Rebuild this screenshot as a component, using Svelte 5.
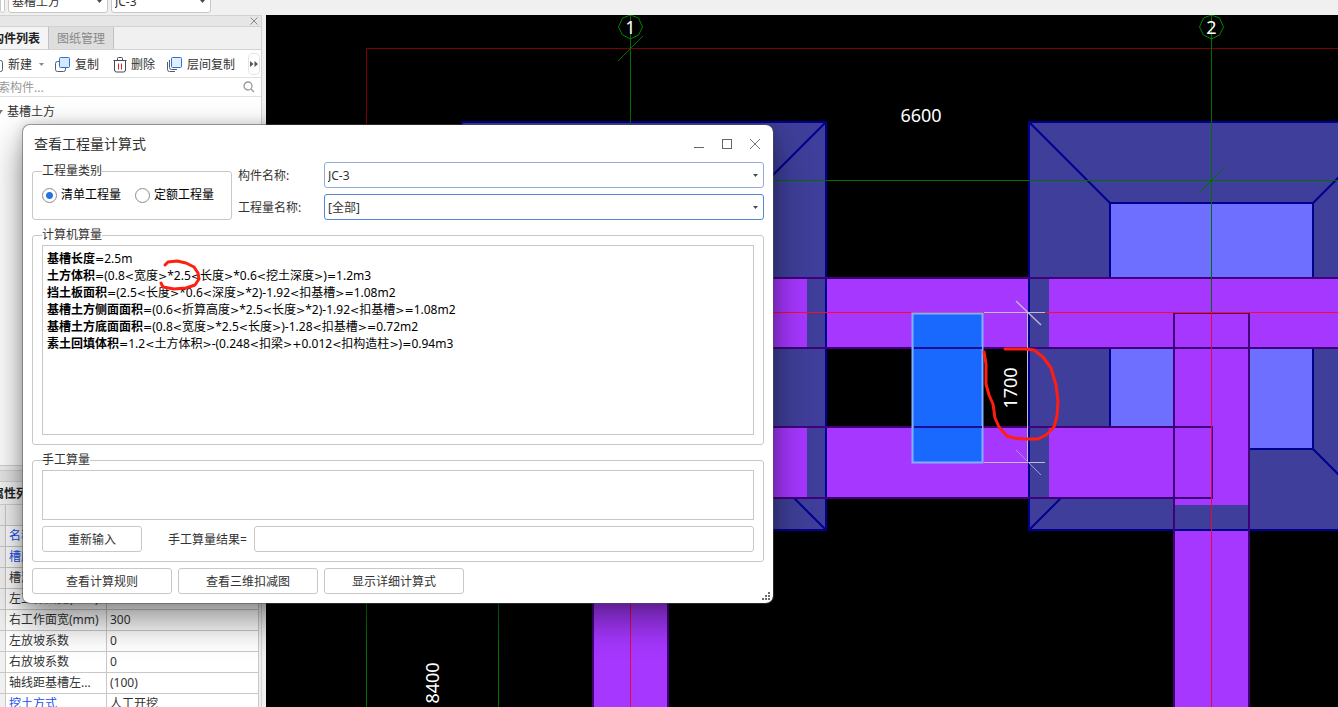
<script lang="ts">
  interface Formula {
    name: string;
    expr: string;
  }

  interface Property {
    name: string;
    value: string;
    link?: boolean;
  }

  const formulas: Formula[] = [
    { name: "基槽长度", expr: "=2.5m" },
    { name: "土方体积", expr: "=(0.8<宽度>*2.5<长度>*0.6<挖土深度>)=1.2m3" },
    { name: "挡土板面积", expr: "=(2.5<长度>*0.6<深度>*2)-1.92<扣基槽>=1.08m2" },
    { name: "基槽土方侧面面积", expr: "=(0.6<折算高度>*2.5<长度>*2)-1.92<扣基槽>=1.08m2" },
    { name: "基槽土方底面面积", expr: "=(0.8<宽度>*2.5<长度>)-1.28<扣基槽>=0.72m2" },
    { name: "素土回填体积", expr: "=1.2<土方体积>-(0.248<扣梁>+0.012<扣构造柱>)=0.94m3" },
  ];

  const properties: Property[] = [
    { name: "名称", value: "", link: true },
    { name: "槽底宽", value: "", link: true },
    { name: "槽深", value: "" },
    { name: "左工作面宽(mm)", value: "300" },
    { name: "右工作面宽(mm)", value: "300" },
    { name: "左放坡系数", value: "0" },
    { name: "右放坡系数", value: "0" },
    { name: "轴线距基槽左...", value: "(100)" },
    { name: "挖土方式", value: "人工开挖", link: true },
  ];

  let mode = $state("list");
  let manual = $state("");
  let result = $state("");

  // operators get their own, wider face
  function tokens(expr: string) {
    return expr.split(/([<>=+])/).filter(Boolean);
  }
</script>

<div class="app">
  <header class="topbar">
    <select class="top-select first" aria-label="楼层"><option></option></select>
    <select class="top-select" aria-label="构件类型"><option>基槽土方</option></select>
    <select class="top-select" aria-label="构件"><option>JC-3</option></select>
  </header>

  <div class="workspace">
    <aside class="sidebar">
      <section class="components">
        <div class="strip">
          <button class="strip-close" aria-label="关闭">
            <svg width="8" height="8" viewBox="0 0 8 8"><path d="M.5.5l7 7M7.5.5l-7 7" stroke="#8a8a8a" /></svg>
          </button>
        </div>
        <div class="tabs">
          <button class="tab active">构件列表</button>
          <button class="tab">图纸管理</button>
        </div>
        <div class="toolbar">
          <button class="tool">
            <svg width="16" height="16" viewBox="0 0 16 16" fill="none" stroke="#555a6e"><path d="M3.500 3.500h9a2 2 0 0 1 2 2v7a2 2 0 0 1-2 2h-9z" /></svg>
            新建
            <svg class="more" width="5" height="3" viewBox="0 0 5 3"><path d="M0 0h5L2.500 3z" fill="#888" /></svg>
          </button>
          <button class="tool copy">
            <svg width="16" height="16" viewBox="0 0 16 16" fill="none">
              <path d="M4 4.500H2.500a2 2 0 0 0-2 2v6a2 2 0 0 0 2 2h6a2 2 0 0 0 2-2V11" stroke="#555a6e" />
              <rect x="4.500" y=".5" width="10" height="10" rx="1" fill="#d8e8fb" stroke="#2374e1" />
            </svg>
            复制
          </button>
          <button class="tool del">
            <svg width="14" height="16" viewBox="0 0 14 16" fill="none">
              <path d="M.5 3.500h13M4.500 3V1.500a1 1 0 0 1 1-1h3a1 1 0 0 1 1 1V3M1.500 4v9a2 2 0 0 0 2 2h7a2 2 0 0 0 2-2V4" stroke="#444959" />
              <path d="M5.500 6.500v6M8.500 6.500v6" stroke="#e02020" />
            </svg>
            删除
          </button>
          <button class="tool floors">
            <svg width="16" height="16" viewBox="0 0 16 16" fill="none">
              <path d="M.5 5v7.500a2 2 0 0 0 2 2H8M2.500 3v7.500a2 2 0 0 0 2 2H10" stroke="#555a6e" />
              <rect x="4.500" y=".5" width="10" height="10" rx="1" fill="#e2eefc" stroke="#2374e1" />
            </svg>
            层间复制
          </button>
          <button class="overflow" aria-label="更多">
            <svg width="8" height="6" viewBox="0 0 8 6"><path d="M0 0l3.500 3L0 6zM4.500 0L8 3 4.500 6z" fill="#555" /></svg>
          </button>
        </div>
        <label class="search">
          <input type="text" placeholder="搜索构件..." aria-label="搜索构件" />
          <svg width="12" height="12" viewBox="0 0 12 12" fill="none" stroke="#999" stroke-width="1.300"><circle cx="5" cy="5" r="4" /><path d="M8 8l3 3" /></svg>
        </label>
        <div class="tree">
          <div class="tree-node">
            <svg width="7" height="5" viewBox="0 0 7 5"><path d="M0 0h7L3.500 5z" fill="#777" /></svg>
            基槽土方
          </div>
        </div>
      </section>

      <section class="properties">
        <div class="strip"></div>
        <div class="tabs"><button class="tab active">属性列表</button></div>
        <table>
          <thead>
            <tr><th class="index"></th><th class="name"></th><th></th></tr>
          </thead>
          <tbody>
            {#each properties as property (property.name)}
              <tr>
                <td class="index"></td>
                <td class="name" class:link={property.link}>{property.name}</td>
                <td>{property.value}</td>
              </tr>
            {/each}
          </tbody>
        </table>
      </section>
    </aside>

    <main class="canvas">
      <svg width="100%" height="100%" aria-label="基槽平面图">
        <g transform="translate(-266 -15)">
          <!-- excavation slopes -->
          <g fill="#3f3f9b" stroke="#00008f" stroke-width="2">
            <rect x="462" y="122" width="364" height="408" />
            <rect x="1029" y="122" width="365" height="408" />
            <path fill="none" d="M826 122l-81 81M826 530l-81-81M1029 122l81 81M1029 530l81-81M1313 203l81-81M1313 449l81 81" />
            <rect x="1110" y="203" width="203" height="246" fill="#6f6fff" />
          </g>

          <!-- trenches -->
          <g fill="#a637ff">
            <rect x="593" y="560" width="75" height="180" />
            <rect x="560" y="278" width="900" height="70" />
            <rect x="560" y="427" width="652" height="71" />
            <rect x="1174" y="313" width="75" height="420" />
          </g>
          <g fill="#3f3f9b">
            <rect x="807" y="278" width="19" height="70" />
            <rect x="1029" y="278" width="20" height="70" />
            <rect x="807" y="427" width="19" height="71" />
            <rect x="1029" y="427" width="20" height="71" />
            <rect x="1174" y="505" width="75" height="25" />
          </g>
          <path d="M826 278v70M826 427v71M1029 278v70M1029 427v71M1174 530h75" stroke="#00008f" stroke-width="2" />
          <g fill="none" stroke="#40007c" stroke-width="2">
            <path d="M560 278h900M560 348h900M560 427h652v71H560" />
            <path d="M1174 740V313h75v427M593 740V560M668 740V560" />
          </g>

          <!-- axis grid -->
          <g fill="none" shape-rendering="crispEdges">
            <path d="M366.500 240V48.500H1400" stroke="#7b0000" />
            <path d="M630.500 15v200M1211.500 15v297M366.500 560v160M498.500 560v160M560 180.500h840" stroke="#006f00" />
            <path d="M560 312.500h840" stroke="#ff0a28" />
            <path d="M630.500 560v160M1211.500 313v407" stroke="#e60a3c" />
          </g>
          <g fill="none" stroke="#006f00">
            <path d="M618 61l25-25M1199 193l25-25" />
            <path d="M630.500 15l8 3 4 9-4 8-8 4-8-4-4-8 4-9zM1211.500 15l8 3 4 9-4 8-8 4-8-4-4-8 4-9z" stroke="#008500" />
          </g>

          <!-- selected trench -->
          <rect x="912.500" y="313.500" width="70" height="149" fill="#1a69ff" stroke="#83aeff" stroke-width="2" />
          <path d="M914 348h68M914 427h68" stroke="#220c93" stroke-width="2" />

          <g fill="none" stroke="#c4b9cf">
            <path d="M984 312.500h61M984 462.500h61M1027.500 312v150" shape-rendering="crispEdges" />
            <path d="M1016 301l25 24" stroke-width="1.300" />
            <path d="M1016 450l25 25" stroke="#aa93cf" />
          </g>

          <g class="dims">
            <text x="630.500" y="34">1</text>
            <text x="1211.500" y="34">2</text>
            <text x="921" y="122">6600</text>
            <text transform="translate(1017 388) rotate(-90)">1700</text>
            <text transform="translate(439 683) rotate(-90)">8400</text>
          </g>
        </g>
      </svg>
    </main>
  </div>

  <div class="dialog" role="dialog" aria-labelledby="dialog-title">
    <div class="titlebar">
      <h1 id="dialog-title">查看工程量计算式</h1>
      <div class="window-buttons">
        <button aria-label="最小化"><svg width="12" height="12" viewBox="0 0 12 12"><path d="M1 9.500h10" stroke="#666" /></svg></button>
        <button aria-label="最大化"><svg width="12" height="12" viewBox="0 0 12 12"><rect x="1.500" y="1.500" width="9" height="9" fill="none" stroke="#666" /></svg></button>
        <button aria-label="关闭"><svg width="12" height="12" viewBox="0 0 12 12"><path d="M1 1l10 10M11 1L1 11" stroke="#777" /></svg></button>
      </div>
    </div>

    <div class="filters">
      <fieldset class="kind">
        <legend>工程量类别</legend>
        <div class="radios">
          <label><input type="radio" name="mode" value="list" bind:group={mode} />清单工程量</label>
          <label><input type="radio" name="mode" value="quota" bind:group={mode} />定额工程量</label>
        </div>
      </fieldset>
      <div class="combos">
        <label for="component">构件名称:</label>
        <select id="component"><option>JC-3</option></select>
        <label for="quantity">工程量名称:</label>
        <select id="quantity" class="focused"><option>[全部]</option></select>
      </div>
    </div>

    <fieldset>
      <legend>计算机算量</legend>
      <div class="formulas">
        {#each formulas as formula (formula.name)}
          <p>
            <b>{formula.name}</b>{#each tokens(formula.expr) as token}<span class:op={"<>=+".includes(token)}>{token}</span>{/each}
          </p>
        {/each}
      </div>
    </fieldset>

    <fieldset>
      <legend>手工算量</legend>
      <textarea bind:value={manual} aria-label="手工算量"></textarea>
      <div class="manual-row">
        <button class="btn small" onclick={() => (manual = "")}>重新输入</button>
        <label for="result">手工算量结果=</label>
        <input id="result" type="text" bind:value={result} />
      </div>
    </fieldset>

    <div class="actions">
      <button class="btn">查看计算规则</button>
      <button class="btn">查看三维扣减图</button>
      <button class="btn">显示详细计算式</button>
    </div>

    <svg class="grip" width="8" height="8" viewBox="0 0 8 8" fill="#666b75">
      <path d="M6 0h2v2H6zM3 3h2v2H3zM6 3h2v2H6zM0 6h2v2H0zM3 6h2v2H3zM6 6h2v2H6z" />
    </svg>
  </div>

  <!-- pen marks -->
  <svg class="marks" width="100%" height="100%" fill="none" stroke="#ff1e10" stroke-width="3" stroke-linecap="round" stroke-linejoin="round">
    <path d="M165 265l3-3 9-1 9 2 8 4 4 6 1 6-4 6-9 3-12 1-11-2-2-4" />
    <path d="M984 352l2 12v20l3 11 4 9 2 14 4 9 8 9 7 2 10 1h14l8-4 8-8 3-11 1-15-2-16-5-17-8-11-9-7-9-1h-20" />
  </svg>
</div>

<style>
  :global(body) {
    margin: 0;
  }

  .app {
    position: relative;
    display: flex;
    flex-direction: column;
    height: 100vh;
    overflow: hidden;
    background: #f0f0f0;
    color: #333;
    font: 12px/16px "Noto Sans", "Noto Sans CJK SC", sans-serif;
  }

  button,
  input,
  select,
  textarea {
    box-sizing: border-box;
    margin: 0;
    font: inherit;
    color: inherit;
  }

  button {
    padding: 0;
    border: 0;
    background: none;
  }

  .topbar {
    display: flex;
    align-items: flex-end;
    gap: 3px;
    height: 13px;
    padding-bottom: 2px;
    flex: none;
  }

  select {
    appearance: none;
    border: 1px solid #c8c8c8;
    border-radius: 3px;
    background: #fff url("data:image/svg+xml,%3Csvg xmlns='http://www.w3.org/2000/svg' width='5' height='3'%3E%3Cpath d='M0 0h5L2.500 3z' fill='%23444a5c'/%3E%3C/svg%3E") no-repeat right 5px center;
  }

  .top-select {
    width: 100px;
    height: 24px;
    padding: 2px 3px 0;
    flex: none;
  }

  .top-select.first {
    width: 5px;
    background-image: none;
    padding: 0;
  }

  .workspace {
    flex: 1;
    display: flex;
    min-height: 0;
  }

  .sidebar {
    flex: none;
    display: flex;
    flex-direction: column;
    gap: 4px;
    width: 261px;
    margin-right: 4px;
    overflow: hidden;
    border-right: 1px solid #d2d2d2;
  }

  .components {
    height: 451px;
    display: flex;
    flex-direction: column;
    border-bottom: 1px solid #d2d2d2;
    box-sizing: border-box;
    background: #fff;
    flex: none;
  }

  .strip {
    display: flex;
    justify-content: flex-end;
    align-items: center;
    height: 12px;
    box-sizing: border-box;
    border: solid #d2d2d2;
    border-width: 1px 0;
    background: #e6e6e6;
  }

  .strip-close {
    display: flex;
    margin-right: 3px;
  }

  .tabs {
    display: flex;
    height: 23px;
    box-sizing: border-box;
    border-bottom: 1px solid #d2d2d2;
    background: #f0f0f0;
  }

  .tab {
    height: 22px;
    width: 65px;
    padding-top: 2px;
    border-right: 1px solid #bfc2c6;
    background: #dedede;
    color: #888;
  }

  .tab.active {
    margin-left: -16px;
    background: #f4f4f4;
    color: #222;
    font-weight: bold;
  }

  .toolbar {
    display: flex;
    align-items: center;
    height: 28px;
    box-sizing: border-box;
    border-bottom: 1px solid #e0e0e0;
    margin-left: -12px;
    white-space: nowrap;
  }

  .tool {
    display: flex;
    align-items: center;
    gap: 4px;
    padding-top: 2px;
    flex: none;
  }

  .tool .more {
    margin-left: 3px;
  }

  .tool.copy {
    margin-left: 11px;
  }

  .tool.del {
    margin-left: 14px;
  }

  .tool.floors {
    margin-left: 12px;
  }

  .overflow {
    display: flex;
    align-items: center;
    justify-content: center;
    width: 10px;
    height: 20px;
    margin-left: auto;
    margin-right: 2px;
    border-radius: 4px;
    box-shadow: 0 0 0 1px #e4e4e4;
  }

  .search {
    display: flex;
    align-items: center;
    height: 19px;
    box-sizing: border-box;
    border-bottom: 1px solid #e0e0e0;
    padding-right: 6px;
    margin-left: -14px;
  }

  .search input {
    flex: 1;
    height: 18px;
    padding: 0;
    border: 0;
    background: none;
  }

  .search input::placeholder {
    color: #999;
  }

  .tree {
    padding-top: 6px;
    margin-left: -4px;
  }

  .tree-node {
    display: flex;
    align-items: center;
    gap: 4px;
    height: 18px;
  }

  table {
    width: 259px;
    border-collapse: separate;
    border-spacing: 0;
    table-layout: fixed;
    background: #fff;
  }

  th,
  td {
    height: 20px;
    padding: 0 3px;
    border: solid #c8c8c8;
    border-width: 0 1px 1px 0;
    white-space: nowrap;
    overflow: hidden;
  }

  th {
    background: #f4f4f4;
  }

  .index {
    width: 5px;
    padding: 0;
    background: #f0f0f0;
  }

  .name {
    width: 94px;
  }

  .link {
    color: #1450f0;
  }

  .canvas {
    flex: 1;
    min-width: 0;
    background: #000;
  }

  .canvas svg {
    display: block;
  }

  .dims text {
    fill: #fff;
    font-size: 18px;
    text-anchor: middle;
  }

  .dialog {
    position: absolute;
    left: 22px;
    top: 124px;
    width: 732px;
    padding: 0 9px 9px;
    border: 1px solid rgba(80, 80, 80, 0.5);
    border-radius: 8px;
    background: #fff;
    background-clip: padding-box;
    box-shadow: 0 16px 36px rgba(0, 0, 0, 0.45), 0 0 12px rgba(0, 0, 0, 0.15);
  }

  .titlebar {
    display: flex;
    align-items: center;
    justify-content: space-between;
    height: 37px;
    padding: 0 3px 0 2px;
  }

  h1 {
    margin: 0;
    font-size: 14px;
    font-weight: normal;
  }

  .window-buttons {
    display: flex;
    gap: 16px;
  }

  .window-buttons button {
    display: flex;
  }

  fieldset {
    min-width: 0;
    margin: 7px 0 0;
    padding: 2px 9px 9px;
    border: 1px solid #c8c8c8;
    border-radius: 3px;
  }

  legend {
    padding: 0;
    height: 16px;
  }

  .filters {
    display: flex;
    gap: 6px;
  }

  .kind {
    box-sizing: border-box;
    width: 200px;
    height: 57px;
    margin-top: 1px;
  }

  .radios {
    display: flex;
    gap: 14px;
    padding-top: 6px;
    color: #000;
  }

  .radios label {
    display: flex;
    align-items: center;
    gap: 4px;
    white-space: nowrap;
  }

  .radios input {
    appearance: none;
    width: 15px;
    height: 15px;
    border: 1px solid #8a8a8a;
    border-radius: 50%;
  }

  .radios input:checked {
    background: radial-gradient(circle, #2374e1 3px, #fff 4px);
  }

  .combos {
    flex: 1;
    display: grid;
    grid-template-columns: 86px 1fr;
    row-gap: 6px;
    align-items: center;
  }

  .combos label {
    padding-top: 2px;
  }

  .combos select {
    height: 26px;
    padding: 2px 3px 0;
    border-color: #92acd9;
  }

  .combos select.focused {
    border-color: #5585d6;
  }

  .formulas {
    height: 180px;
    padding: 4px;
    border: 1px solid #c8c8c8;
    color: #000;
  }

  .formulas p {
    height: 17px;
    margin: 0;
    line-height: 17px;
    white-space: nowrap;
  }

  .op {
    font-family: "DejaVu Sans", sans-serif;
    font-size: 11px;
    line-height: 1px;
  }

  textarea {
    display: block;
    width: 100%;
    height: 50px;
    border: 1px solid #c8c8c8;
    resize: none;
  }

  .manual-row {
    display: flex;
    align-items: center;
    margin-top: 6px;
  }

  .manual-row label {
    padding-top: 2px;
    margin: 0 7px 0 26px;
  }

  .manual-row input {
    flex: 1;
    height: 26px;
    border: 1px solid #c8c8c8;
    border-radius: 3px;
  }

  .btn {
    width: 140px;
    height: 26px;
    padding-top: 2px;
    border: 1px solid #c8c8c8;
    border-radius: 3px;
    background: #fff;
  }

  .btn.small {
    width: 100px;
  }

  .actions {
    display: flex;
    gap: 6px;
    margin-top: 6px;
  }

  .grip {
    position: absolute;
    right: 3px;
    bottom: 3px;
  }

  .marks {
    position: absolute;
    inset: 0;
    pointer-events: none;
  }
</style>
